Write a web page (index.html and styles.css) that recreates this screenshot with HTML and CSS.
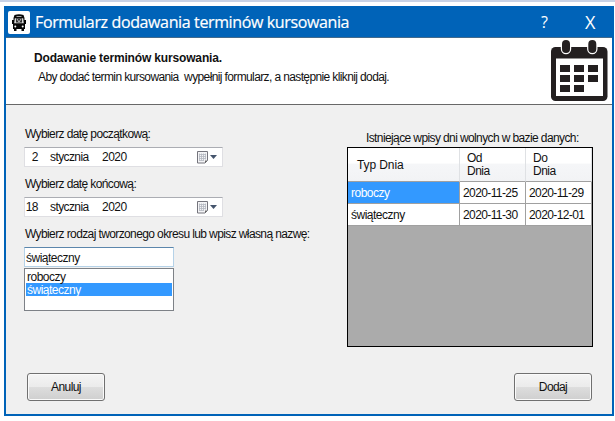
FILE: index.html
```html
<!DOCTYPE html>
<html lang="pl">
<head>
<meta charset="utf-8">
<title>Formularz dodawania terminów kursowania</title>
<link rel="stylesheet" href="styles.css">
</head>
<body>
<main class="window">
  <header class="titlebar">
    <span class="app-icon">
      <svg width="14" height="18" viewBox="0 0 14 18">
        <path d="M2.500 1Q7-.6 11.500 1L12.500 4V6H14V10H13V15H12V17H9.500V15H4.500V17H2V15H1V10H0V6H1.500V4Z" fill="#080808"/>
        <path d="M4.500 2H9.500V2.800H4.500Z" fill="#ccc"/>
        <path d="M2.800 4.200H11.200L11.800 9.300H2.200Z" fill="#d8d8d8"/>
        <path d="M4 4.200H10V8.500H4Z" fill="#333"/>
        <path d="M5 5L7 8L9 5" fill="none" stroke="#ddd" stroke-width=".8"/>
        <circle cx="3.300" cy="12.500" r="1" fill="#fff"/><circle cx="10.700" cy="12.500" r="1" fill="#fff"/>
      </svg>
    </span>
    <h1 class="title">Formularz dodawania terminów kursowania</h1>
    <span class="help">?</span>
    <span class="close">X</span>
  </header>
  <section class="intro">
    <div class="intro-text">
      <h2>Dodawanie terminów kursowania.</h2>
      <p>Aby dodać termin kursowania&nbsp; wypełnij formularz, a następnie kliknij dodaj.</p>
    </div>
    <svg class="calendar" width="57" height="62" viewBox="0 0 57 62">
      <rect x="0" y="7" width="56.500" height="54" rx="4.500" fill="#231f20"/>
      <rect x="5" y="18.500" width="47" height="37.500" fill="#fff"/>
      <rect class="ring" x="11" y="0" width="8" height="13" rx="4"/>
      <rect class="ring" x="37.300" y="0" width="8" height="13" rx="4"/>
      <path d="M9 25h10v7H9zM23 25h10v7H23zM37 25h10v7H37zM9 35h10v7H9zM23 35h10v7H23zM37 35h10v7H37zM9 45h10v7H9zM23 45h10v7H23z" fill="#231f20"/>
    </svg>
  </section>
  <section class="body">
    <div class="form">
      <label>Wybierz datę początkową:</label>
      <div class="picker">
        <span class="day">2</span><span class="month">stycznia</span><span class="year">2020</span>
        <svg width="20" height="13" viewBox="0 0 20 13"><path d="M.5.5H10.500V9.500L8 12H.5Z" fill="#f4f4f6" stroke="#74747c"/><path d="M2.500 2.500v7M4.500 2.500v7M6.500 2.500v7M8.500 2.500v6M2 3.500h7M2 5.500h7M2 7.500h7M2 9.500h5" stroke="#b4b8c0" stroke-width=".8"/><path d="M8 12V9.500h2.500Z" fill="#666"/><path d="M13 4h7l-3.500 4Z" fill="#44546c"/></svg>
      </div>
      <label>Wybierz datę końcową:</label>
      <div class="picker">
        <span class="day">18</span><span class="month">stycznia</span><span class="year">2020</span>
        <svg width="20" height="13" viewBox="0 0 20 13"><path d="M.5.5H10.500V9.500L8 12H.5Z" fill="#f4f4f6" stroke="#74747c"/><path d="M2.500 2.500v7M4.500 2.500v7M6.500 2.500v7M8.500 2.500v6M2 3.500h7M2 5.500h7M2 7.500h7M2 9.500h5" stroke="#b4b8c0" stroke-width=".8"/><path d="M8 12V9.500h2.500Z" fill="#666"/><path d="M13 4h7l-3.500 4Z" fill="#44546c"/></svg>
      </div>
      <label>Wybierz rodzaj tworzonego okresu lub wpisz własną nazwę:</label>
      <div class="input">świąteczny</div>
      <ul class="list">
        <li>roboczy</li>
        <li class="selected">świąteczny</li>
      </ul>
    </div>
    <div class="entries">
      <div class="caption">Istniejące wpisy dni wolnych w bazie danych:</div>
      <div class="grid">
        <div class="row head"><span>Typ Dnia</span><span>Od<br>Dnia</span><span>Do<br>Dnia</span></div>
        <div class="row"><span class="current">roboczy</span><span class="date">2020-11-25</span><span class="date">2020-11-29</span></div>
        <div class="row"><span>świąteczny</span><span class="date">2020-11-30</span><span class="date">2020-12-01</span></div>
      </div>
    </div>
  </section>
  <footer class="actions">
    <button>Anuluj</button>
    <button>Dodaj</button>
  </footer>
</main>
</body>
</html>
```
FILE: styles.css
```css
* { box-sizing: border-box; }
body {
  margin: 0;
  height: 421px;
  padding: 4px 1px 0 4px;
  border-top: 2px solid #c8d2e6;
  background: #fff;
  color: #111;
  font: 12px/14px "Liberation Sans", Arial, sans-serif;
  letter-spacing: -0.5px;
  white-space: nowrap;
  overflow: hidden;
}
.window {
  height: 410px;
  display: flex;
  flex-direction: column;
  border: solid #0063b8;
  border-width: 0 2px 2px;
  background: #f0f0f0;
}
.titlebar {
  height: 32px;
  flex: none;
  display: flex;
  align-items: center;
  padding-left: 2px;
  border-bottom: 1px solid #426a8c;
  background: #0063b8;
  color: #fff;
  font-family: "Open Sans", "Noto Sans", sans-serif;
}
.app-icon {
  width: 22px;
  height: 23px;
  margin-top: 2px;
  display: flex;
  align-items: center;
  justify-content: center;
  border-radius: 2px;
  background: #fff;
}
.title {
  width: 506px;
  margin: 1px 0 0 5px;
  font-size: 16px;
  line-height: 24px;
  font-weight: 400;
  letter-spacing: -0.37px;
  -webkit-text-stroke: 0.2px #fff;
}
.help { width: 44px; font-size: 16px; }
.close { font-size: 18px; }
.intro {
  height: 67px;
  flex: none;
  display: flex;
  justify-content: space-between;
  padding: 2px 4px 0 28px;
  border-bottom: 1px solid #686868;
  background: #fff;
}
.ring {
  fill: #231f20;
  stroke: #fff;
  stroke-width: 2.4px;
  paint-order: stroke;
}
.intro-text { padding-top: 11px; }
.intro h2 {
  margin: 0 0 5px;
  font-size: 12px;
  line-height: 14px;
  letter-spacing: -0.16px;
}
.intro p { margin: 0 0 0 4px; letter-spacing: -0.62px; }
.body {
  height: 262px;
  flex: none;
  display: flex;
  justify-content: space-between;
  padding: 22px 19px 0 18px;
}
.form { width: 199px; }
label {
  display: block;
  height: 20px;
  margin-left: 1px;
  letter-spacing: -0.61px;
}
.picker {
  width: 199px;
  height: 20px;
  margin-bottom: 10px;
  display: flex;
  align-items: center;
  border: 1px solid #dfdfe3;
  border-top-color: #abadb3;
  background: #fff;
}
.day { width: 13px; text-align: right; }
.month { width: 52px; margin-left: 12px; letter-spacing: -0.6px; }
.year { width: 95px; }
.input {
  width: 150px;
  height: 20px;
  padding: 3px 1px;
  border: 1px solid #b5d2e8;
  border-top-color: #5b86ac;
  background: #fff;
}
.list {
  width: 150px;
  height: 43px;
  margin: 1px 0 0;
  padding: 1px;
  border: 1px solid #7d8187;
  background: #fff;
  list-style: none;
}
.list li { height: 13px; padding-left: 1px; line-height: 14px; }
.list .selected { background: #3399ff; color: #fff; }
.entries { width: 246px; padding-top: 4px; }
.caption { height: 16px; padding-left: 19px; letter-spacing: -0.61px; }
.grid {
  height: 200px;
  border: 1px solid #000;
  background: #ababab;
}
.row {
  height: 22px;
  display: grid;
  grid-template-columns: 112px 66px 66px;
}
.row span {
  padding: 4px 0 0 3px;
  border-right: 1px solid #a0a0a0;
  border-bottom: 1px solid #a0a0a0;
  background: #fff;
}
.row .current { background: #3399ff; color: #fff; }
.row .date { letter-spacing: -0.6px; }
.head { height: 34px; }
.head span {
  padding: 4px 0 0 7px;
  line-height: 13px;
  border-right-color: #dfe1e4;
  background: linear-gradient(#fff 45%, #f5f6f8 50%, #f2f3f5);
}
.head span:first-child { padding: 11px 0 0 9px; letter-spacing: -0.1px; }
.actions {
  display: flex;
  justify-content: space-between;
  padding: 6px 20px 0 21px;
}
button {
  width: 78px;
  height: 28px;
  padding: 0;
  border: 1px solid #707070;
  border-radius: 3px;
  background: linear-gradient(#f4f4f4, #ebebeb 50%, #dddddd 51%, #cfcfcf);
  box-shadow: inset 0 0 0 1px #fafafa;
  color: #111;
  font: inherit;
  letter-spacing: -0.6px;
}
```
